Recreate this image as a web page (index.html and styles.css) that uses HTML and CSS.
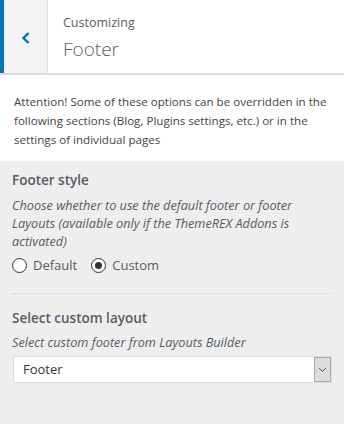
FILE: index.html
```html
<!DOCTYPE html>
<html lang="en">
<head>
  <meta charset="UTF-8" />
  <title>Customizing – Footer</title>
  <link rel="stylesheet" href="styles.css">
</head>
<body>
  <div class="panel-header">
    <button class="back-button" aria-label="Back">
      <svg width="10" height="14" viewBox="0 0 10 14"><path d="M7.5 2 L2.5 7 L7.5 12" fill="none" stroke="#0073aa" stroke-width="2.4"/></svg>
    </button>
    <div class="panel-title">
      <span class="crumb">Customizing</span>
      <h1>Footer</h1>
    </div>
  </div>

  <div class="notice">
    Attention! Some of these options can be overridden in the following sections (Blog, Plugins settings, etc.) or in the settings of individual pages
  </div>

  <div class="controls">
    <div class="control">
      <div class="control-title">Footer style</div>
      <div class="control-desc">Choose whether to use the default footer or footer Layouts (available only if the ThemeREX Addons is activated)</div>
      <div class="radios">
        <label class="radio"><span class="radio-dot"></span>Default</label>
        <label class="radio"><span class="radio-dot checked"></span>Custom</label>
      </div>
    </div>

    <div class="control">
      <div class="control-title">Select custom layout</div>
      <div class="control-desc">Select custom footer from Layouts Builder</div>
      <div class="select">
        <span class="select-value">Footer</span>
        <span class="select-arrow">
          <svg width="9" height="6" viewBox="0 0 9 6"><path d="M1 1 L4.5 4.5 L8 1" fill="none" stroke="#555" stroke-width="1"/></svg>
        </span>
      </div>
    </div>
  </div>
</body>
</html>
```

FILE: styles.css
```css
* {
  margin: 0; padding: 0; box-sizing: border-box;
}
body {
  font-family: 'Open Sans', 'Noto Sans', sans-serif;
  background: #eee;
  color: #555d66;
  width: 344px;
  height: 424px;
  overflow: hidden;
}
.panel-header {
  display: flex;
  height: 75px;
  background: #fff;
  border-bottom: 2px solid #ddd;
}
.back-button {
  width: 48px;
  border: none;
  border-left: 4px solid #0073aa;
  border-right: 1px solid #ddd;
  background: #f3f3f5;
  display: flex;
  align-items: center;
  justify-content: center;
  padding-top: 2px;
}
.panel-title {
  padding: 14px 0 0 15px;
  display: flex;
  flex-direction: column;
}
.crumb {
  font-size: 12.5px;
  line-height: 18px;
  color: #555d66;
}
.panel-title h1 {
  font-size: 19px;
  font-weight: 300;
  line-height: 26px;
  margin-top: 4px;
  color: #555d66;
}
.notice {
  background: #fff;
  padding: 17px 14px 12px 14px;
  font-size: 11.6px;
  line-height: 19px;
  color: #444;
}
.controls {
  padding: 0 12px;
}
.control {
  padding: 8px 0 19px;
}
.control + .control {
  border-top: 1px dotted #ccc;
  padding-top: 13px;
}
.control + .control .control-title {
  margin-bottom: 4px;
}
.control-title {
  font-size: 13.5px;
  font-weight: 600;
  line-height: 22px;
  color: #555d66;
  margin-bottom: 5px;
}
.control-desc {
  font-size: 12.7px;
  font-style: italic;
  line-height: 18px;
  color: #555d66;
}
.radios {
  display: flex;
  gap: 14px;
  margin-top: 6px;
  font-size: 13px;
}
.radio {
  display: flex;
  align-items: center;
  gap: 6px;
  color: #555d66;
}
.radio-dot {
  width: 15px;
  height: 15px;
  border: 1px solid #333;
  border-radius: 50%;
  background: #fff;
  position: relative;
}
.radio-dot.checked::after {
  content: '';
  position: absolute;
  left: 3px; top: 3px;
  width: 7px; height: 7px;
  border-radius: 50%;
  background: #333;
}
.select {
  display: flex;
  margin-top: 5px;
  height: 27px;
  background: #fff;
  border: 1px solid #ddd;
  margin-left: 1px;
}
.select-value {
  flex: 1;
  font-size: 13px;
  line-height: 25px;
  padding-left: 9px;
  color: #32373c;
}
.select-arrow {
  width: 17px;
  background: #ddd;
  border: 1px solid #aaa;
  display: flex;
  align-items: center;
  justify-content: center;
}
```
